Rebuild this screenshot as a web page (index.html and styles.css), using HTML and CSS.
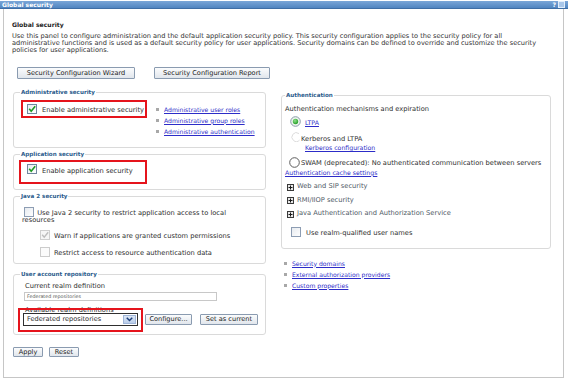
FILE: index.html
```html
<!DOCTYPE html>
<html>
<head>
<meta charset="utf-8">
<title>Global security</title>
<link rel="stylesheet" href="styles.css">
</head>
<body>
<div class="titlebar">
  <span class="title">Global security</span>
  <span class="tb-icons"><span class="help">?</span><span class="minbox"></span></span>
</div>
<div class="panel">
  <h1 class="heading">Global security</h1>
  <p class="desc">Use this panel to configure administration and the default application security policy. This security configuration applies to the security policy for all<br>administrative functions and is used as a default security policy for user applications. Security domains can be defined to override and customize the security<br>policies for user applications.</p>
  <div class="topbtns">
    <button class="btn btn-wizard">Security Configuration Wizard</button>
    <button class="btn btn-report">Security Configuration Report</button>
  </div>

  <div class="cols">
    <div class="col-left">
      <fieldset class="box box-admin">
        <legend>Administrative security</legend>
        <div class="admin-row">
          <label class="hl hl-admin">
            <svg class="cb" width="10" height="10" viewBox="0 0 10 10"><defs><linearGradient id="g1" x1="0" y1="0" x2="1" y2="1"><stop offset="0" stop-color="#e6eaef"/><stop offset="1" stop-color="#ffffff"/></linearGradient></defs><rect x="0.5" y="0.5" width="9" height="9" fill="url(#g1)" stroke="#71869f"/><path d="M2.2 4.8 L4.2 7.2 L8.2 2.2" fill="none" stroke="#1f9a24" stroke-width="1.6"/></svg>
            <span class="cb-text">Enable administrative security</span>
          </label>
          <ul class="links admin-links">
            <li><a href="#">Administrative user roles</a></li>
            <li><a href="#">Administrative group roles</a></li>
            <li><a href="#">Administrative authentication</a></li>
          </ul>
        </div>
      </fieldset>

      <fieldset class="box box-app">
        <legend>Application security</legend>
        <label class="hl hl-app">
          <svg class="cb" width="10" height="10" viewBox="0 0 10 10"><rect x="0.5" y="0.5" width="9" height="9" fill="url(#g1)" stroke="#71869f"/><path d="M2.2 4.8 L4.2 7.2 L8.2 2.2" fill="none" stroke="#1f9a24" stroke-width="1.6"/></svg>
          <span class="cb-text">Enable application security</span>
        </label>
      </fieldset>

      <fieldset class="box box-java">
        <legend>Java 2 security</legend>
        <p class="java-main"><svg class="cb cb-inline" width="10" height="10" viewBox="0 0 10 10"><rect x="0.5" y="0.5" width="9" height="9" fill="url(#g1)" stroke="#8d9db3"/></svg> Use Java 2 security to restrict application access to local<br>resources</p>
        <div class="cb-row java-sub java-warn">
          <svg class="cb" width="10" height="10" viewBox="0 0 10 10"><rect x="0.5" y="0.5" width="9" height="9" fill="#f6f6f6" stroke="#cfcfcf"/><path d="M2.2 4.8 L4.2 7.2 L8.2 2.2" fill="none" stroke="#bdbdbd" stroke-width="1.4"/></svg>
          <span>Warn if applications are granted custom permissions</span>
        </div>
        <div class="cb-row java-sub java-restrict">
          <svg class="cb" width="10" height="10" viewBox="0 0 10 10"><rect x="0.5" y="0.5" width="9" height="9" fill="#fbfbfb" stroke="#cccccc"/></svg>
          <span>Restrict access to resource authentication data</span>
        </div>
      </fieldset>

      <fieldset class="box box-user">
        <legend>User account repository</legend>
        <div class="field-label">Current realm definition</div>
        <div class="readonly">Federated repositories</div>
        <div class="field-label avail">Available realm definitions</div>
        <div class="realm-row">
          <div class="hl hl-select">
            <div class="select">
              <span class="sel-text">Federated repositories</span>
              <span class="sel-arrow"><svg width="12" height="9" viewBox="0 0 12 9"><path d="M3 2.5 L6 5.5 L9 2.5" fill="none" stroke="#1d3f7a" stroke-width="1.6"/></svg></span>
            </div>
          </div>
          <button class="btn btn-conf">Configure...</button>
          <button class="btn btn-set">Set as current</button>
        </div>
      </fieldset>

      <div class="bottombtns">
        <button class="btn btn-apply">Apply</button>
        <button class="btn btn-reset">Reset</button>
      </div>
    </div>

    <div class="col-right">
      <fieldset class="box box-auth">
        <legend>Authentication</legend>
        <div class="auth-title">Authentication mechanisms and expiration</div>
        <div class="radio-row r-ltpa">
          <svg class="radio" width="11" height="11" viewBox="0 0 11 11"><defs><radialGradient id="rg" cx="0.4" cy="0.35" r="0.7"><stop offset="0" stop-color="#8fe08a"/><stop offset="1" stop-color="#1e9a22"/></radialGradient></defs><circle cx="5.5" cy="5.5" r="4.8" fill="#eef6ee" stroke="#8a9aa8"/><circle cx="5.5" cy="5.5" r="2.7" fill="url(#rg)"/></svg>
          <a href="#">LTPA</a>
        </div>
        <div class="radio-row r-kerb">
          <svg class="radio" width="10" height="10" viewBox="0 0 10 10"><path d="M8 1.6 A4.4 4.4 0 1 0 8.6 8" fill="none" stroke="#dcdcdc"/></svg>
          <span>Kerberos and LTPA</span>
        </div>
        <a href="#" class="kerb-conf">Kerberos configuration</a>
        <div class="radio-row r-swam">
          <svg class="radio" width="11" height="11" viewBox="0 0 11 11"><circle cx="5.5" cy="5.5" r="4.8" fill="#ffffff" stroke="#5c5c5c"/></svg>
          <span>SWAM (deprecated): No authenticated communication between servers</span>
        </div>
        <a href="#" class="cache-link">Authentication cache settings</a>
        <div class="exp-row exp-first">
          <svg class="plus" width="7" height="7" viewBox="0 0 7 7"><rect x="0.5" y="0.5" width="6" height="6" fill="#e9e9e9" stroke="#3a3a3a"/><path d="M1.5 3.5 H5.5 M3.5 1.5 V5.5" stroke="#1a1a1a" stroke-width="1"/></svg>
          <span>Web and SIP security</span>
        </div>
        <div class="exp-row">
          <svg class="plus" width="7" height="7" viewBox="0 0 7 7"><rect x="0.5" y="0.5" width="6" height="6" fill="#e9e9e9" stroke="#3a3a3a"/><path d="M1.5 3.5 H5.5 M3.5 1.5 V5.5" stroke="#1a1a1a" stroke-width="1"/></svg>
          <span>RMI/IIOP security</span>
        </div>
        <div class="exp-row">
          <svg class="plus" width="7" height="7" viewBox="0 0 7 7"><rect x="0.5" y="0.5" width="6" height="6" fill="#e9e9e9" stroke="#3a3a3a"/><path d="M1.5 3.5 H5.5 M3.5 1.5 V5.5" stroke="#1a1a1a" stroke-width="1"/></svg>
          <span>Java Authentication and Authorization Service</span>
        </div>
        <div class="cb-row realm-q">
          <svg class="cb" width="10" height="10" viewBox="0 0 10 10"><rect x="0.5" y="0.5" width="9" height="9" fill="url(#g1)" stroke="#8d9db3"/></svg>
          <span>Use realm-qualified user names</span>
        </div>
      </fieldset>
      <ul class="links more-links">
        <li><a href="#">Security domains</a></li>
        <li><a href="#">External authorization providers</a></li>
        <li><a href="#">Custom properties</a></li>
      </ul>
    </div>
  </div>
</div>
</body>
</html>
```

FILE: styles.css
```css
* { box-sizing: border-box; }
html, body { margin: 0; padding: 0; background: #ffffff; }
body {
  width: 568px;
  height: 381px;
  overflow: hidden;
  font-family: "DejaVu Sans", Verdana, sans-serif;
  font-size: 6.7px;
  line-height: 7.3px;
  color: #2e2e2e;
}
a { color: #2c2cc8; text-decoration: underline; }

.titlebar {
  margin-top: 1px;
  height: 8px;
  background: linear-gradient(#7aa6d8, #5185c0);
  border-bottom: 1px solid #3f6ea5;
  display: flex;
  justify-content: space-between;
  align-items: center;
  padding: 0 3px 0 2px;
  color: #ffffff;
  font-weight: bold;
  font-size: 6px;
}
.tb-icons { display: flex; align-items: center; gap: 2px; }
.help { font-size: 6px; line-height: 6px; }
.minbox {
  width: 7px;
  height: 7px;
  background: #a9c7ea;
  border: 1px solid #e2eefb;
}

.panel {
  margin-left: 3px;
  width: 561px;
  height: 369px;
  border: 1px solid #c6c6c6;
  border-top: 0;
  padding: 12px 8px 0 8px;
}
.heading {
  margin: 0;
  font-size: 6.1px;
  line-height: 7px;
  font-weight: bold;
  color: #222;
}
.desc {
  margin: 4.5px 0 0 0;
  white-space: nowrap;
  font-size: 6.62px;
  color: #333;
}
.topbtns {
  margin-top: 13px;
  padding-left: 5px;
  display: flex;
  gap: 19px;
}
.btn {
  font-family: "DejaVu Sans", Verdana, sans-serif;
  font-size: 6.6px;
  color: #222;
  height: 12px;
  padding: 0;
  border: 1px solid #8a9bb0;
  border-radius: 1px;
  background: linear-gradient(#fbfcfd, #e1e6ec);
  line-height: 10px;
}
.btn-wizard { width: 118px; }
.btn-report { width: 116px; }

.cols {
  margin-top: 10px;
  margin-left: 1px;
  display: flex;
  gap: 15px;
  align-items: flex-start;
}
.col-left { width: 253px; }
.col-right { width: 270px; margin-top: 2.5px; }

.box {
  margin: 0;
  padding: 0 6px;
  border: 1px solid #dadada;
  border-radius: 3px;
  min-width: 0;
}
.box legend {
  padding: 0 1px;
  font-size: 5.6px;
  line-height: 7px;
  font-weight: bold;
  color: #2b5c8c;
}

.hl {
  border: 2px solid #e5141c;
  display: flex;
  align-items: center;
}
.cb { display: block; flex: none; }
.cb-text { padding-top: 2px; }

.box-admin { height: 59px; }
.admin-row { display: flex; align-items: flex-start; margin-top: 4px; }
.hl-admin {
  margin-left: 1px;
  width: 126px;
  height: 18px;
  padding-left: 4px;
  gap: 5px;
}
.links { list-style: none; margin: 0; padding: 0; font-size: 6.1px; }
.links li { display: flex; align-items: center; height: 11px; }
.links li::before {
  content: "";
  width: 3px;
  height: 3px;
  background: #a8a8a8;
  margin-right: 5px;
  flex: none;
}
.admin-links { margin-left: 9px; margin-top: 3.5px; }

.box-app { height: 39px; margin-top: 3px; }
.hl-app {
  margin-left: -1px;
  margin-top: 2px;
  width: 128px;
  height: 24px;
  padding: 2px 0 0 6px;
  gap: 5px;
  align-items: flex-start;
}
.hl-app .cb-text { padding-top: 4px; }

.box-java { height: 71px; margin-top: 3px; }
.java-main {
  margin: 10px 0 0 2px;
  line-height: 7px;
}
.cb-inline {
  display: inline-block;
  vertical-align: -2px;
  margin: -3px 1px 0 2px;
}
.cb-row { display: flex; align-items: center; gap: 4px; }
.java-sub { margin-left: 20px; height: 10px; }
.java-warn { margin-top: 6px; }
.java-restrict { margin-top: 7px; }
.java-sub span { padding-top: 3px; }

.box-user { height: 64px; margin-top: 7px; }
.field-label { margin-left: 5px; margin-top: 5px; }
.readonly {
  margin-left: 4px;
  margin-top: 1.5px;
  width: 193px;
  height: 9px;
  border: 1px solid #c8c8c8;
  font-size: 4.8px;
  line-height: 7px;
  color: #555;
  padding-left: 2px;
}
.field-label.avail { margin-top: 6px; }
.realm-row { display: flex; align-items: center; margin-top: -6.5px; margin-left: -2px; }
.hl-select {
  position: relative;
  width: 125px;
  height: 24px;
  padding-left: 3px;
}
.select {
  width: 115px;
  height: 13px;
  border: 1px solid #2f2f2f;
  display: flex;
  align-items: center;
  justify-content: space-between;
  padding: 0 1px 0 3px;
  background: #fff;
  font-size: 6.6px;
}
.sel-arrow {
  width: 13px;
  height: 9px;
  background: linear-gradient(#dde8f7, #b9cdea);
  border: 1px solid #9fb5d8;
  display: flex;
  align-items: center;
  justify-content: center;
}
.sel-arrow svg { display: block; }
.btn-conf { width: 47px; height: 11px; margin-left: 2px; line-height: 9px; }
.btn-set { width: 58px; height: 11px; margin-left: 8px; line-height: 9px; }

.bottombtns { display: flex; gap: 6px; margin-top: 12px; }
.btn-apply, .btn-reset { width: 30px; height: 10px; line-height: 8px; }

.box-auth { height: 157px; padding: 0 3px; }
.auth-title { margin-top: 7px; }
.radio-row { display: flex; align-items: center; }
.radio { display: block; flex: none; }
.r-ltpa { margin-left: 5px; margin-top: 2.5px; gap: 4px; }
.r-ltpa a { padding-top: 3px; font-size: 6.2px; }
.r-kerb { margin-left: 6px; margin-top: 4.5px; }
.r-kerb span { padding-top: 5px; color: #333; }
.kerb-conf { display: block; margin-left: 20px; margin-top: 1px; font-size: 6.2px; }
.r-swam { margin-left: 4px; margin-top: 5px; gap: 1px; }
.r-swam span { padding-top: 3px; }
.cache-link { display: block; margin-top: 1px; font-size: 6.2px; }
.exp-row { display: flex; align-items: center; gap: 3px; margin-left: 2px; height: 7px; color: #4f5a66; }
.exp-first { margin-top: 7.5px; }
.exp-row + .exp-row { margin-top: 6.5px; }
.realm-q { margin-left: 6px; margin-top: 9px; gap: 5px; }
.realm-q span { padding-top: 3px; }
.more-links { margin-top: 9px; margin-left: 3px; }
```
